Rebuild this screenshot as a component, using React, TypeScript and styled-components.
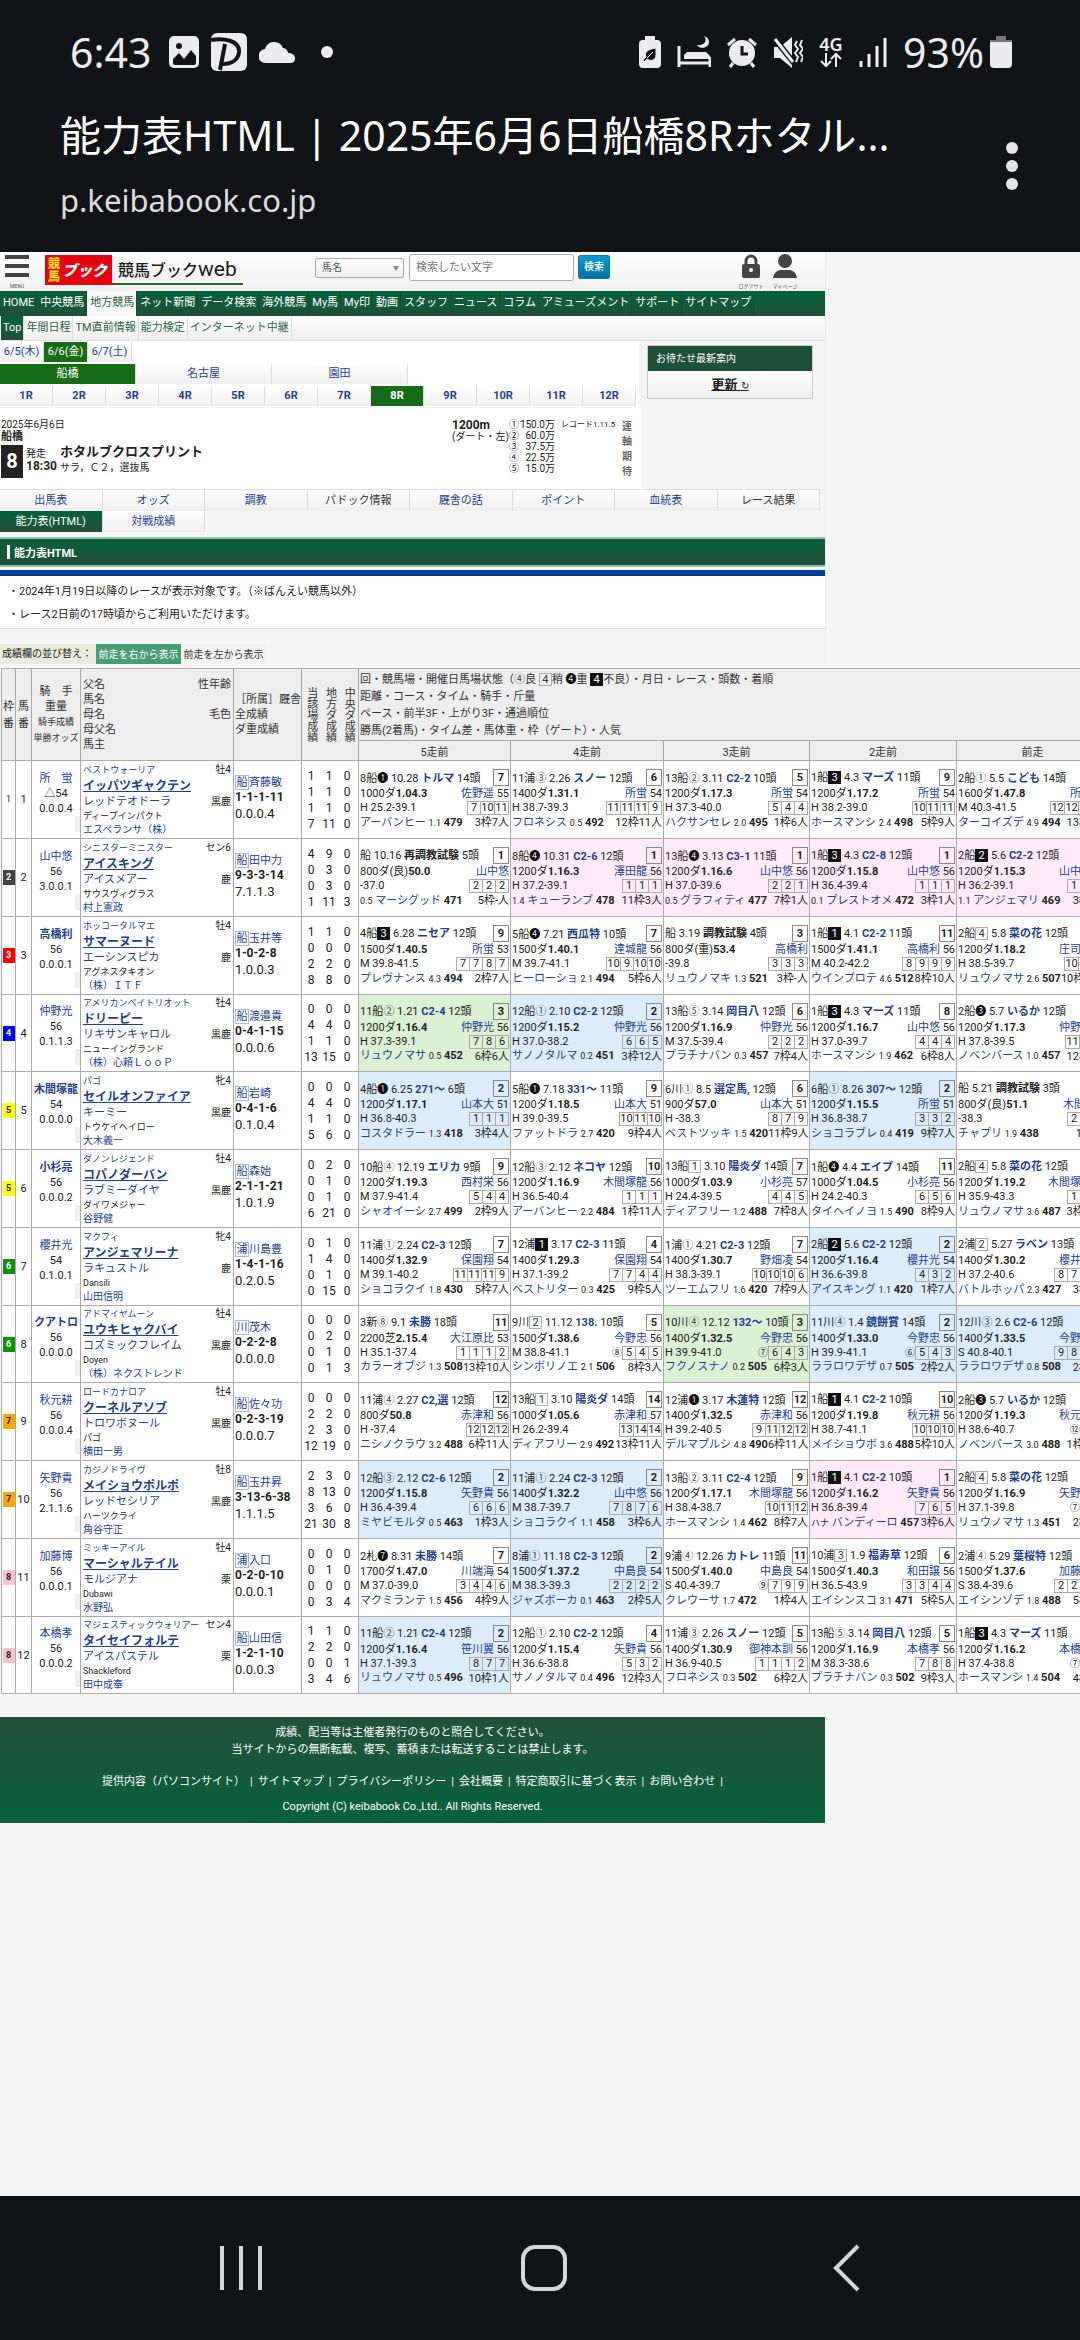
import React from "react";
import styled, { createGlobalStyle, css } from "styled-components";

const GlobalStyle = createGlobalStyle`
  * { box-sizing: border-box; }
  body {
    margin: 0;
    background: #f5f5f5;
    color: #222;
    font-family: Roboto, "Noto Sans CJK JP", sans-serif;
    font-size: 11px;
  }
  a { color: inherit; text-decoration: none; }
`;

const ink = "#121317";
const blue = "#25408f";
const deepGreen = "#204f39";
const freshGreen = "#05623a";
const activeGreen = "#166b16";
const pale = "linear-gradient(#ffffff, #eeeeee)";

/* ---------- phone chrome ---------- */

const Screen = styled.div`
  display: flex;
  flex-direction: column;
  min-height: 100vh;
  overflow: hidden;
`;

const Chrome = styled.header`
  background: ${ink};
  color: #f2f2f4;
  height: 252px;
  font-family: "Noto Sans", "Noto Sans CJK JP", sans-serif;
`;

const StatusBar = styled.div`
  display: flex;
  align-items: center;
  justify-content: space-between;
  height: 104px;
  padding: 0 68px 0 70px;
  font-size: 41px;
  line-height: 40px;
  color: #ececee;
`;

const StatusGroup = styled.div<{ $gap: number }>`
  display: flex;
  align-items: center;
  gap: ${(p) => p.$gap}px;
`;

const NetworkMark = styled.span`
  display: flex;
  flex-direction: column;
  align-items: center;
  font-size: 18px;
  font-weight: 600;
  line-height: 16px;
`;

const AppBar = styled.div`
  display: flex;
  align-items: center;
  justify-content: space-between;
  height: 124px;
  padding: 0 60px;
`;

const PageTitle = styled.h1`
  margin: 0;
  padding-top: 2px;
  font-size: 41px;
  line-height: 66px;
  font-weight: 400;
  color: #fff;
`;

const PageHost = styled.p`
  margin: 0;
  font-size: 31px;
  line-height: 64px;
  color: #dddde0;
`;

const MoreButton = styled.button`
  display: flex;
  border: 0;
  padding: 0;
  background: none;
`;

const SystemNav = styled.nav`
  margin-top: auto;
  display: flex;
  align-items: center;
  justify-content: space-around;
  height: 144px;
  padding: 0 82px 0 90px;
  background: ${ink};
`;

const SystemButton = styled.button`
  display: flex;
  border: 0;
  padding: 0;
  background: none;
`;

/* ---------- site frame ---------- */

const Site = styled.main`
  width: 100%;
`;

const Column = styled.div`
  width: 826px;
  max-width: 100%;
  border-right: 1px solid #e9e9e9;
`;

const SiteHeader = styled.div`
  display: flex;
  align-items: flex-start;
  height: 39px;
  padding: 2px 28px 0 5px;
  background: linear-gradient(#ffffff, #f0f0f0);
`;

const IconLink = styled.a`
  display: flex;
  flex-direction: column;
  align-items: center;
  width: 24px;
  font-size: 5px;
  line-height: 8px;
  color: #555;
  white-space: nowrap;
  gap: 4px;
`;

const Brand = styled.a`
  display: flex;
  align-items: flex-start;
  margin: 1px 0 0 16px;
`;

const BrandName = styled.span`
  display: flex;
  align-items: baseline;
  height: 30px;
  width: 131px;
  padding-left: 6px;
  font-size: 16px;
  line-height: 28px;
  font-weight: 500;
  border-bottom: 2px solid #1d6b22;
  color: #1a1a1a;
  span { font-size: 21px; font-weight: 400; }
`;

const SearchForm = styled.form`
  display: flex;
  align-items: flex-start;
  gap: 4px;
  margin-left: 72px;
  flex: 1;
`;

const SelectWrap = styled.label`
  position: relative;
  margin: 4px 1px 0 0;
  &::after {
    content: "";
    position: absolute;
    right: 5px;
    top: 8px;
    border: 3px solid transparent;
    border-top: 5px solid #888;
    border-bottom: 0;
  }
`;

const FieldSelect = styled.select`
  display: block;
  appearance: none;
  width: 89px;
  height: 20px;
  padding: 0 6px;
  border: 1px solid #aaa;
  border-radius: 2px;
  background: ${pale};
  color: #555;
  font: 10px/18px Roboto, "Noto Sans CJK JP", sans-serif;
`;

const SearchInput = styled.input`
  width: 165px;
  height: 27px;
  padding: 0 6px;
  border: 1px solid #aaa;
  border-radius: 3px;
  background: #fff;
  font: 11px/20px Roboto, "Noto Sans CJK JP", sans-serif;
  &::placeholder { color: #777; }
`;

const SearchButton = styled.button`
  width: 32px;
  height: 24px;
  margin-top: 1px;
  padding: 0;
  border: 1px solid #0a7fab;
  border-radius: 2px;
  background: linear-gradient(#0a9bcd, #0670a0);
  color: #fff;
  font: 500 10px/20px Roboto, "Noto Sans CJK JP", sans-serif;
`;

const UserLinks = styled.div`
  display: flex;
  gap: 10px;
`;

const GlobalNav = styled.nav`
  display: flex;
  height: 25px;
  background: linear-gradient(${freshGreen}, ${deepGreen});
`;

const GlobalLink = styled.a<{ $on?: boolean }>`
  padding: 0 2px 0 3px;
  line-height: 24px;
  white-space: nowrap;
  border-right: 1px solid #1a4a33;
  color: ${(p) => (p.$on ? "#2f5f47" : "#fff")};
  background: ${(p) => (p.$on ? "#f8f8f8" : "transparent")};
`;

const SubNav = styled.nav`
  display: flex;
  height: 25px;
  padding-left: 1px;
  background: ${pale};
  border-bottom: 1px solid #ddd;
`;

const SubLink = styled.a<{ $on?: boolean }>`
  padding: 0 2px;
  line-height: 24px;
  border-right: 1px solid #ddd;
  color: ${(p) => (p.$on ? "#fff" : "#2f5f47")};
  background: ${(p) => (p.$on ? `linear-gradient(${freshGreen}, ${deepGreen})` : "transparent")};
`;

const Upper = styled.div`
  display: flex;
  align-items: flex-start;
  justify-content: space-between;
  padding-right: 12px;
`;

const RacePane = styled.section`
  width: 642px;
`;

const Picker = styled.div`
  width: 639px;
  background: #fff;
  padding-top: 1px;
`;

const PickRow = styled.div`
  display: flex;
  height: 21px;
  margin-bottom: 1px;
`;

const Pick = styled.a<{ $w: number; $on?: boolean; $bold?: boolean }>`
  width: ${(p) => p.$w}px;
  height: 20px;
  line-height: 20px;
  text-align: center;
  border-right: 1px solid #ddd;
  font-weight: ${(p) => (p.$bold ? 700 : 400)};
  color: ${(p) => (p.$on ? "#fff" : blue)};
  background: ${(p) => (p.$on ? activeGreen : pale)};
`;

const RaceInfo = styled.div`
  display: flex;
  height: 81px;
  margin-top: 1px;
  padding: 11px 10px 0 1px;
  background: #fff;
  font-size: 10px;
  line-height: 12px;
`;

const RaceLead = styled.div`
  width: 451px;
`;

const Venue = styled.strong`
  display: block;
  font-size: 11px;
  line-height: 12px;
`;

const RaceHead = styled.div`
  display: flex;
  gap: 2px;
  margin-top: 2px;
`;

const RaceNumber = styled.span`
  width: 22px;
  height: 33px;
  margin-right: 1px;
  background: #222;
  color: #fff;
  font-size: 20px;
  font-weight: 700;
  line-height: 32px;
  text-align: center;
`;

const StartTime = styled.div`
  width: 32px;
  padding-top: 3px;
  line-height: 12px;
  b { display: block; font-size: 12px; }
`;

const RaceName = styled.div`
  line-height: 18px;
  h2 { margin: 0; font-size: 13px; line-height: 14px; }
`;

const Distance = styled.div`
  width: 57px;
  b { display: block; font-size: 12px; }
`;

const Prizes = styled.ol`
  list-style: none;
  width: 46px;
  margin: 0 6px 0 0;
  padding: 0;
  line-height: 11px;
  li { display: flex; justify-content: space-between; }
`;

const Record = styled.div`
  width: 61px;
  font-size: 8px;
`;

const Hope = styled.div`
  width: 10px;
  font-weight: 700;
  line-height: 15px;
  color: #666;
`;

const Notice = styled.aside`
  width: 166px;
  margin-top: 4px;
  border: 1px solid #c8d0cc;
`;

const NoticeTitle = styled.h3`
  margin: 0;
  padding-left: 8px;
  height: 25px;
  line-height: 25px;
  font-size: 10px;
  font-weight: 400;
  color: #fff;
  background: ${deepGreen};
`;

const NoticeBody = styled.a`
  display: block;
  height: 27px;
  line-height: 27px;
  text-align: center;
  font-size: 13px;
  font-weight: 700;
  color: #222;
  text-decoration: underline;
  background: ${pale};
  span { font-size: 10px; font-weight: 400; }
`;

const Tabs = styled.nav`
  display: grid;
  grid-template-columns: repeat(8, 1fr);
  margin-right: 5px;
  border-top: 1px solid #ddd;
`;

const Tab = styled.a<{ $on?: boolean; $plain?: boolean }>`
  height: 21px;
  line-height: 21px;
  text-align: center;
  border-right: 1px solid #ddd;
  color: ${(p) => (p.$on ? "#fff" : p.$plain ? "#333" : blue)};
  background: ${(p) => (p.$on ? `linear-gradient(${freshGreen}, ${deepGreen})` : pale)};
`;

const SectionBar = styled.h2`
  display: flex;
  align-items: center;
  gap: 4px;
  height: 30px;
  margin: 5px 0 3px;
  padding-left: 7px;
  font-size: 11px;
  color: #fff;
  border: solid #9dbcac;
  border-width: 2px 0;
  background: linear-gradient(${freshGreen}, ${deepGreen});
  &::before { content: ""; width: 3px; height: 14px; background: #fff; }
`;

const NoteList = styled.ul`
  list-style: none;
  margin: 0;
  padding: 4px 8px 0;
  height: 59px;
  border-top: 6px solid #003f96;
  border-bottom: 1px solid #ddd;
  background: #fff;
  li { line-height: 23px; }
`;

const SortBar = styled.div`
  display: flex;
  margin-top: 15px;
  height: 20px;
  line-height: 19px;
`;

const SortLabel = styled.span`
  width: 96px;
  padding-left: 2px;
  font-size: 10px;
  background: #e9ecdb;
`;

const SortButton = styled.button<{ $on?: boolean }>`
  width: 85px;
  padding: 0;
  border: 0;
  white-space: nowrap;
  font: 10px/19px Roboto, "Noto Sans CJK JP", sans-serif;
  color: ${(p) => (p.$on ? "#fff" : "#333")};
  background: ${(p) => (p.$on ? "#469c74" : "#f2f2f2")};
`;

/* ---------- ability table ---------- */

const TableScroll = styled.div`
  overflow: hidden;
  padding: 4px 0 0 1px;
`;

const Ability = styled.table`
  table-layout: fixed;
  width: 1108px;
  border-collapse: separate;
  border-spacing: 0;
  border: solid #aaa;
  border-width: 1px 0 0 1px;
  background: #fff;
`;

const edge = css`
  padding: 0;
  border: solid #aaa;
  border-width: 0 1px 1px 0;
`;

const HeadCell = styled.th<{ $align?: string }>`
  ${edge}
  background: #eee;
  font-weight: 400;
  text-align: ${(p) => p.$align ?? "center"};
  color: #333;
`;

const HeadRow = styled.tr<{ $h: number }>`
  height: ${(p) => p.$h}px;
`;

const HeadLines = styled.div<{ $lh: number; $pad?: number }>`
  line-height: ${(p) => p.$lh}px;
  padding: 0 ${(p) => p.$pad ?? 0}px;
  small { font-size: 9px; white-space: nowrap; }
  > div { display: flex; justify-content: space-between; white-space: nowrap; }
`;

const Upright = styled.div`
  display: flex;
  justify-content: space-around;
  span { writing-mode: vertical-rl; line-height: 15px; }
`;

const BodyRow = styled.tr`
  height: 78px;
  &:nth-child(4n) { height: 77px; }
`;

const Cell = styled.td<{ $tone?: string }>`
  ${edge}
  overflow: hidden;
  background: ${(p) => p.$tone ?? "#fff"};
`;

const NumCell = styled(Cell)`
  text-align: center;
`;

const frameTones: Record<number, [string, string]> = {
  1: ["#fff", "#222"],
  2: ["#444", "#fff"],
  3: ["#f00", "#fff"],
  4: ["#00f", "#fff"],
  5: ["#ff0", "#222"],
  6: ["#0a930a", "#fff"],
  7: ["#ffa500", "#222"],
  8: ["#ffc0cb", "#222"],
};

const Frame = styled.span<{ $n: number }>`
  display: block;
  width: 12px;
  height: 15px;
  margin: 0 auto;
  font-size: 9px;
  line-height: 15px;
  font-weight: ${(p) => (p.$n === 1 ? 400 : 700)};
  color: ${(p) => frameTones[p.$n][1]};
  background: ${(p) => frameTones[p.$n][0]};
`;

const JockeyBox = styled.div`
  display: flex;
  flex-direction: column;
  align-items: center;
  height: 76px;
  padding-top: 9px;
  line-height: 15px;
  white-space: nowrap;
`;

const OddsBar = styled.span`
  align-self: flex-end;
  margin-top: auto;
  margin-bottom: 6px;
  width: 5px;
  height: 16px;
  background: #eee;
`;

const Link = styled.a<{ $bold?: boolean }>`
  color: ${blue};
  font-weight: ${(p) => (p.$bold ? 700 : 400)};
`;

const Pedigree = styled.div`
  display: flex;
  flex-direction: column;
  padding: 0 2px;
  line-height: 14px;
`;

const PedLine = styled.div<{ $size: number }>`
  display: flex;
  justify-content: space-between;
  height: 14px;
  line-height: 14px;
  font-size: ${(p) => p.$size}px;
  white-space: nowrap;
  > span:last-child:not(:first-child) { font-size: 10px; }
`;

const HorseName = styled.a`
  color: ${blue};
  font-size: 12px;
  line-height: 18px;
  font-weight: 700;
  text-decoration: underline;
`;

const Stable = styled.div`
  padding-left: 1px;
  white-space: nowrap;
  line-height: 15px;
  b { display: block; font-size: 12px; line-height: 14px; }
  div { font-size: 13px; line-height: 20px; }
`;

const Area = styled.a`
  display: inline-block;
  width: 14px;
  height: 15px;
  line-height: 13px;
  text-align: center;
  border: 1px solid #a9b8de;
  color: ${blue};
`;

const Marks = styled.div`
  display: grid;
  grid-template-columns: repeat(3, 18px);
  justify-content: center;
  text-align: center;
  font-size: 12px;
  line-height: 16px;
  padding-right: 2px;
`;

const RunBox = styled.div`
  padding: 0 1px;
  white-space: nowrap;
`;

const RunLine = styled.div<{ $h: number }>`
  display: flex;
  align-items: center;
  justify-content: space-between;
  height: ${(p) => p.$h}px;
  line-height: ${(p) => p.$h}px;
  small { font-size: 9px; }
`;

const Finish = styled.b`
  width: 16px;
  height: 17px;
  line-height: 15px;
  text-align: center;
  border: 1px solid #888;
`;

const Going = styled.span<{ $dark?: boolean }>`
  display: inline-block;
  width: 13px;
  height: 13px;
  line-height: 11px;
  text-align: center;
  border: 1px solid ${(p) => (p.$dark ? "#111" : "#aaa")};
  background: ${(p) => (p.$dark ? "#111" : "transparent")};
  color: ${(p) => (p.$dark ? "#fff" : "#333")};
`;

const GoingDot = styled.span<{ $dark?: boolean }>`
  color: ${(p) => (p.$dark ? "#111" : "#444")};
  font-family: "Noto Sans CJK JP", sans-serif;
`;

const Passing = styled.span`
  display: flex;
  align-items: center;
  i { font-style: normal; font-size: 10px; margin-right: 1px; }
`;

const PassBox = styled.span<{ $wide: boolean }>`
  width: ${(p) => (p.$wide ? 15 : 14)}px;
  height: 14px;
  margin-left: -1px;
  line-height: 12px;
  text-align: center;
  border: 1px solid #aaa;
`;

/* ---------- footer ---------- */

const Footer = styled.footer`
  width: 825px;
  max-width: 100%;
  height: 106px;
  margin-top: 23px;
  padding-top: 7px;
  text-align: center;
  line-height: 17px;
  color: #fff;
  background: linear-gradient(#24503b, ${freshGreen});
  p { margin: 0; }
`;

const FooterLinks = styled.div`
  display: flex;
  justify-content: center;
  gap: 5px;
  margin: 15px 0 8px;
`;

/* ---------- data ---------- */

type Run = [
  meeting: string, going: string, date: string, race: string, heads: string, finish: number,
  course: string, time: string, jockey: string, load: string,
  pace: string, passing: string,
  rival: string, gap: string, body: string, gate: string
];

interface Entry {
  frame: number; no: number;
  jockey: string; load: string; jrec: string; bold?: boolean;
  sire: string; sex: string; name: string; dam: string; coat: string; bms: string; owner: string;
  area: string; stable: string; total: string; wet: string;
  rec: string;
  runs: Run[];
}

const entries: Entry[] = [
  {
    frame: 1, no: 1, jockey: "所　蛍", load: "△54", jrec: "0.0.0.4",
    sire: "ベストウォーリア", sex: "牡4", name: "イッパツギャクテン", dam: "レッドテオドーラ", coat: "黒鹿", bms: "ディープインパクト", owner: "エスペランサ（株）",
    area: "船", stable: "斉藤敏", total: "1-1-1-11", wet: "0.0.0.4", rec: "1 1 0 1 1 0 1 1 0 7 11 0",
    runs: [
      ["8船", "d1", "10.28", "トルマ", "14頭", 7, "1000ダ", "1.04.3", "佐野遥", "55", "H 25.2-39.1", "7 10 11", "アーバンヒー", "1.1", "479", "3枠7人"],
      ["11浦", "c3", "2.26", "スノー", "12頭", 6, "1400ダ", "1.31.1", "所蛍", "54", "H 38.7-39.3", "11 11 11 9", "フロネシス", "0.5", "492", "12枠11人"],
      ["13船", "c2", "3.11", "C2-2", "10頭", 5, "1200ダ", "1.17.3", "所蛍", "54", "H 37.3-40.0", "5 4 4", "ハクサンセレ", "2.0", "495", "1枠6人"],
      ["1船", "q3", "4.3", "マーズ", "11頭", 9, "1200ダ", "1.17.2", "所蛍", "54", "H 38.2-39.0", "10 11 11", "ホースマンシ", "2.4", "498", "5枠9人"],
      ["2船", "c1", "5.5", "こども", "14頭", 14, "1600ダ", "1.47.8", "所蛍", "54", "M 40.3-41.5", "12 12 13 14", "ターコイズデ", "4.9", "494", "13枠9人"],
    ],
  },
  {
    frame: 2, no: 2, jockey: "山中悠", load: "56", jrec: "3.0.0.1",
    sire: "シニスターミニスター", sex: "セン6", name: "アイスキング", dam: "アイスメアー", coat: "鹿", bms: "サウスヴィグラス", owner: "村上憲政",
    area: "船", stable: "田中力", total: "9-3-3-14", wet: "7.1.1.3", rec: "4 9 0 0 3 0 0 3 0 1 11 3",
    runs: [
      ["船", "", "10.16", "再調教試験", "5頭", 1, "800ダ(良)", "50.0", "山中悠", "", "-37.0", "2 2 2", "マーシグッド", "0.5", "471", "5枠-人"],
      ["8船", "d4", "10.31", "C2-6", "12頭", 1, "1200ダ", "1.16.3", "澤田龍", "56", "H 37.2-39.1", "1 1 1", "キューランブ", "1.4", "478", "11枠3人"],
      ["13船", "d4", "3.13", "C3-1", "11頭", 1, "1200ダ", "1.16.6", "山中悠", "56", "H 37.0-39.6", "2 2 1", "グラフィティ", "0.5", "477", "7枠1人"],
      ["1船", "q3", "4.3", "C2-8", "12頭", 1, "1200ダ", "1.15.8", "山中悠", "56", "H 36.4-39.4", "1 1 1", "プレストオメ", "0.1", "472", "3枠1人"],
      ["2船", "q2", "5.6", "C2-2", "12頭", 1, "1200ダ", "1.15.3", "山中悠", "56", "H 36.2-39.1", "1 1 1", "アンジェマリ", "1.1", "469", "3枠1人"],
    ],
  },
  {
    frame: 3, no: 3, jockey: "高橋利", load: "56", jrec: "0.0.0.1", bold: true,
    sire: "ホッコータルマエ", sex: "牡4", name: "サマーヌード", dam: "エーシンスピカ", coat: "鹿", bms: "アグネスタキオン", owner: "（株）ＩＴＦ",
    area: "船", stable: "玉井等", total: "1-0-2-8", wet: "1.0.0.3", rec: "1 1 0 0 0 0 2 2 0 8 8 0",
    runs: [
      ["4船", "q3", "6.28", "ニセア", "12頭", 9, "1500ダ", "1.40.5", "所蛍", "53", "M 39.8-41.5", "7 7 8 7", "プレヴナンス", "4.3", "494", "2枠7人"],
      ["5船", "d4", "7.21", "西瓜特", "10頭", 7, "1500ダ", "1.40.1", "達城龍", "56", "M 39.7-41.1", "10 9 10 10", "ヒーローショ", "2.1", "494", "5枠6人"],
      ["船", "", "3.19", "調教試験", "4頭", 3, "800ダ(重)", "53.4", "高橋利", "", "-39.8", "3 3 3", "リュウノマキ", "1.3", "521", "3枠-人"],
      ["1船", "q1", "4.1", "C2-2", "11頭", 11, "1500ダ", "1.41.1", "高橋利", "56", "M 40.2-42.2", "8 9 9 9", "ウインプロテ", "4.6", "512", "8枠10人"],
      ["2船", "s4", "5.8", "菜の花", "12頭", 10, "1200ダ", "1.18.2", "庄司大", "56", "H 38.5-39.7", "10 11 11", "リュウノマサ", "2.6", "507", "10枠12人"],
    ],
  },
  {
    frame: 4, no: 4, jockey: "仲野光", load: "56", jrec: "0.1.1.3",
    sire: "アメリカンペイトリオット", sex: "牡4", name: "ドリーピー", dam: "リキサンキャロル", coat: "黒鹿", bms: "ニューイングランド", owner: "（株）心頼ＬｏｏＰ",
    area: "船", stable: "渡邉貴", total: "0-4-1-15", wet: "0.0.0.6", rec: "0 0 0 4 4 0 1 1 0 13 15 0",
    runs: [
      ["11船", "c2", "1.21", "C2-4", "12頭", 3, "1200ダ", "1.16.4", "仲野光", "56", "H 37.3-39.1", "7 8 6", "リュウノマサ", "0.5", "452", "6枠6人"],
      ["12船", "c1", "2.10", "C2-2", "12頭", 2, "1200ダ", "1.15.2", "仲野光", "56", "H 37.0-38.2", "6 6 5", "サノノタルマ", "0.2", "451", "3枠12人"],
      ["13船", "c5", "3.14", "岡目八", "12頭", 6, "1200ダ", "1.16.9", "仲野光", "56", "M 37.5-39.4", "2 2 2", "プラチナバン", "0.3", "457", "7枠4人"],
      ["1船", "q3", "4.3", "マーズ", "11頭", 8, "1200ダ", "1.16.7", "山中悠", "56", "H 37.0-39.7", "4 4 4", "ホースマンシ", "1.9", "462", "6枠8人"],
      ["2船", "d3", "5.7", "いるか", "12頭", 7, "1200ダ", "1.17.3", "仲野光", "56", "H 37.8-39.5", "11 11 9", "ノベンバース", "1.0", "457", "12枠8人"],
    ],
  },
  {
    frame: 5, no: 5, jockey: "木間塚龍", load: "54", jrec: "0.0.0.0", bold: true,
    sire: "パゴ", sex: "牝4", name: "セイルオンファイア", dam: "キーミー", coat: "黒鹿", bms: "トウケイヘイロー", owner: "大木義一",
    area: "船", stable: "岩崎", total: "0-4-1-6", wet: "0.1.0.4", rec: "0 0 0 4 4 0 1 1 0 5 6 0",
    runs: [
      ["4船", "d1", "6.25", "271〜", "6頭", 2, "1200ダ", "1.17.1", "山本大", "51", "H 36.8-40.3", "1 1 1", "コスタドラー", "1.3", "418", "3枠4人"],
      ["5船", "d1", "7.18", "331〜", "11頭", 9, "1200ダ", "1.18.5", "山本大", "51", "H 39.0-39.5", "10 11 10", "ファットドラ", "2.7", "420", "9枠4人"],
      ["6川", "c1", "8.5", "選定馬,", "12頭", 6, "900ダ", "57.0", "山本大", "51", "H -38.3", "8 7 9", "ベストツッキ", "1.5", "420", "11枠9人"],
      ["6船", "c1", "8.26", "307〜", "12頭", 2, "1200ダ", "1.15.5", "所蛍", "51", "H 36.8-38.7", "3 3 2", "ショコラブレ", "0.4", "419", "9枠7人"],
      ["船", "", "5.21", "調教試験", "3頭", 2, "800ダ(良)", "51.1", "木間塚龍", "", "-38.3", "2 2 2", "チャプリ", "1.9", "438", "1枠-人"],
    ],
  },
  {
    frame: 5, no: 6, jockey: "小杉亮", load: "56", jrec: "0.0.0.2", bold: true,
    sire: "ダノンレジェンド", sex: "牡4", name: "コパノダーバン", dam: "ラブミーダイヤ", coat: "黒鹿", bms: "ダイワメジャー", owner: "谷野健",
    area: "船", stable: "森始", total: "2-1-1-21", wet: "1.0.1.9", rec: "0 2 0 0 1 0 0 1 0 6 21 0",
    runs: [
      ["10船", "c4", "12.19", "エリカ", "9頭", 9, "1200ダ", "1.19.3", "西村栄", "56", "M 37.9-41.4", "5 4 4", "シャオイーシ", "2.7", "499", "2枠9人"],
      ["12船", "c3", "2.12", "ネコヤ", "12頭", 10, "1200ダ", "1.16.9", "木間塚龍", "56", "H 36.5-40.4", "1 1 1", "アーバンヒー", "2.2", "484", "1枠11人"],
      ["13船", "s1", "3.10", "陽炎ダ", "14頭", 7, "1000ダ", "1.03.9", "小杉亮", "57", "H 24.4-39.5", "4 4 5", "ディアフリー", "1.2", "488", "7枠8人"],
      ["1船", "d4", "4.4", "エイプ", "14頭", 11, "1000ダ", "1.04.5", "小杉亮", "56", "H 24.2-40.3", "6 5 6", "タイヘイノヨ", "1.5", "490", "8枠9人"],
      ["2船", "s4", "5.8", "菜の花", "12頭", 12, "1200ダ", "1.19.2", "木間塚龍", "56", "H 35.9-43.3", "1 1 1", "リュウノマサ", "3.6", "487", "3枠11人"],
    ],
  },
  {
    frame: 6, no: 7, jockey: "櫻井光", load: "54", jrec: "0.1.0.1",
    sire: "マクフィ", sex: "牝4", name: "アンジェマリーナ", dam: "ラキュストル", coat: "鹿", bms: "Dansili", owner: "山田信明",
    area: "浦", stable: "川島豊", total: "1-4-1-16", wet: "0.2.0.5", rec: "0 1 0 1 4 0 0 1 0 0 15 0",
    runs: [
      ["11浦", "c1", "2.24", "C2-3", "12頭", 7, "1400ダ", "1.32.9", "保園翔", "54", "M 39.1-40.2", "11 11 11 9", "ショコラクイ", "1.8", "430", "5枠7人"],
      ["12浦", "q1", "3.17", "C2-3", "11頭", 4, "1400ダ", "1.29.3", "保園翔", "54", "H 37.1-39.2", "7 7 4 4", "ベストリター", "0.3", "425", "9枠5人"],
      ["1浦", "c1", "4.21", "C2-3", "12頭", 7, "1400ダ", "1.30.7", "野畑凌", "54", "H 38.3-39.1", "10 10 10 6", "ツーエムフリ", "1.6", "420", "7枠9人"],
      ["2船", "q2", "5.6", "C2-2", "12頭", 2, "1200ダ", "1.16.4", "櫻井光", "54", "H 36.6-39.8", "4 3 2", "アイスキング", "1.1", "420", "1枠7人"],
      ["2浦", "s2", "5.27", "ラベン", "13頭", 8, "1400ダ", "1.30.2", "櫻井光", "54", "H 37.2-40.6", "8 7 7 8", "バトルホッパ", "2.3", "427", "3枠7人"],
    ],
  },
  {
    frame: 6, no: 8, jockey: "クアトロ", load: "56", jrec: "0.0.0.0", bold: true,
    sire: "アドマイヤムーン", sex: "牡4", name: "ユウキヒャクバイ", dam: "コズミックフレイム", coat: "黒鹿", bms: "Doyen", owner: "（株）ネクストレンド",
    area: "川", stable: "茂木", total: "0-2-2-8", wet: "0.0.0.0", rec: "0 0 0 0 2 0 0 1 0 0 1 3",
    runs: [
      ["3新", "c8", "9.1", "未勝", "18頭", 11, "2200芝", "2.15.4", "大江原比", "53", "H 35.1-37.4", "1 1 1 2", "カラーオブジ", "1.3", "508", "13枠10人"],
      ["9川", "s2", "11.12", "138.", "10頭", 5, "1500ダ", "1.38.6", "今野忠", "56", "M 38.8-41.1", "⑧ 5 4 5", "シンボリノエ", "2.1", "506", "8枠3人"],
      ["10川", "c4", "12.12", "132〜", "10頭", 3, "1400ダ", "1.32.5", "今野忠", "56", "H 39.9-41.0", "⑦ 6 4 3", "フクノスナノ", "0.2", "505", "6枠3人"],
      ["11川", "c4", "1.4", "鏡餅賞", "14頭", 2, "1400ダ", "1.33.0", "今野忠", "56", "H 39.9-41.1", "⑥ 5 4 3", "ララロワデザ", "0.7", "505", "2枠2人"],
      ["12川", "c3", "2.6", "C2-6", "12頭", 2, "1400ダ", "1.33.5", "今野忠", "56", "S 40.8-40.1", "9 8 4 3", "ララロワデザ", "0.8", "508", "2枠1人"],
    ],
  },
  {
    frame: 7, no: 9, jockey: "秋元耕", load: "56", jrec: "0.0.0.4",
    sire: "ロードカナロア", sex: "牡4", name: "クーネルアソブ", dam: "トロワボヌール", coat: "黒鹿", bms: "パゴ", owner: "横田一男",
    area: "船", stable: "佐々功", total: "0-2-3-19", wet: "0.0.0.7", rec: "0 0 0 2 2 0 2 3 0 12 19 0",
    runs: [
      ["11浦", "c4", "2.27", "C2,選", "12頭", 12, "800ダ", "50.8", "赤津和", "56", "H -37.4", "12 12 12", "ニシノクラウ", "3.2", "488", "6枠11人"],
      ["13船", "s1", "3.10", "陽炎ダ", "14頭", 14, "1000ダ", "1.05.6", "赤津和", "57", "H 26.2-39.4", "13 14 14", "ディアフリー", "2.9", "492", "13枠11人"],
      ["12浦", "d1", "3.17", "木蓮特", "12頭", 12, "1400ダ", "1.32.5", "赤津和", "56", "H 39.2-40.5", "9 11 12 12", "デルマプルシ", "4.8", "490", "6枠11人"],
      ["1船", "q1", "4.1", "C2-2", "10頭", 10, "1200ダ", "1.19.8", "秋元耕", "56", "H 38.7-41.1", "10 10 10", "メイショウボ", "3.6", "488", "5枠10人"],
      ["2船", "d3", "5.7", "いるか", "12頭", 12, "1200ダ", "1.19.3", "秋元耕", "56", "H 38.6-40.7", "⑫ 9 9", "ノベンバース", "3.0", "488", "1枠12人"],
    ],
  },
  {
    frame: 7, no: 10, jockey: "矢野貴", load: "56", jrec: "2.1.1.6",
    sire: "カジノドライヴ", sex: "牡8", name: "メイショウポルポ", dam: "レッドセシリア", coat: "黒鹿", bms: "ハーツクライ", owner: "角谷守正",
    area: "船", stable: "玉井昇", total: "3-13-6-38", wet: "1.1.1.5", rec: "2 3 0 8 13 0 3 6 0 21 30 8",
    runs: [
      ["12船", "c3", "2.12", "C2-6", "12頭", 2, "1200ダ", "1.15.8", "矢野貴", "56", "H 36.4-39.4", "6 6 6", "ミヤビモルタ", "0.5", "463", "1枠3人"],
      ["11浦", "c1", "2.24", "C2-3", "12頭", 2, "1400ダ", "1.32.2", "山中悠", "56", "M 38.7-39.7", "7 8 7 6", "ショコラクイ", "1.1", "458", "3枠6人"],
      ["13船", "c2", "3.11", "C2-4", "12頭", 9, "1200ダ", "1.17.1", "木間塚龍", "56", "H 38.4-38.7", "10 11 12", "ホースマンシ", "1.4", "462", "8枠7人"],
      ["1船", "q1", "4.1", "C2-2", "10頭", 1, "1200ダ", "1.16.2", "矢野貴", "56", "H 36.8-39.4", "7 6 5", "バンディーロ", "ハナ", "457", "3枠6人"],
      ["2船", "s4", "5.8", "菜の花", "12頭", 5, "1200ダ", "1.16.9", "矢野貴", "56", "H 37.1-39.8", "⑦ 3 5", "リュウノマサ", "1.3", "451", "2枠5人"],
    ],
  },
  {
    frame: 8, no: 11, jockey: "加藤博", load: "56", jrec: "0.0.0.1",
    sire: "ミッキーアイル", sex: "牡4", name: "マーシャルテイル", dam: "モルジアナ", coat: "栗", bms: "Dubawi", owner: "水野弘",
    area: "浦", stable: "入口", total: "0-2-0-10", wet: "0.0.0.1", rec: "0 0 0 0 1 0 0 0 0 0 3 4",
    runs: [
      ["2札", "d7", "8.31", "未勝", "14頭", 7, "1700ダ", "1.47.0", "川端海", "54", "M 37.0-39.0", "3 4 4 6", "マクミランテ", "1.5", "456", "4枠9人"],
      ["8浦", "c1", "11.18", "C2-3", "12頭", 2, "1500ダ", "1.37.2", "中島良", "54", "M 38.3-39.3", "2 2 2 2", "ジャズボーカ", "0.1", "463", "2枠5人"],
      ["9浦", "c4", "12.26", "カトレ", "11頭", 11, "1500ダ", "1.40.0", "中島良", "54", "S 40.4-39.7", "⑨ 7 9 9", "クレウーサ", "1.7", "472", "1枠4人"],
      ["10浦", "s3", "1.9", "福寿草", "12頭", 6, "1500ダ", "1.40.3", "和田譲", "56", "H 36.5-43.9", "3 3 4 4", "エイシンスコ", "3.1", "471", "5枠5人"],
      ["2浦", "c4", "5.29", "葉桜特", "12頭", 9, "1500ダ", "1.37.6", "加藤博", "56", "S 38.4-39.6", "2 2 3 5", "エイシンゾデ", "1.8", "488", "5枠8人"],
    ],
  },
  {
    frame: 8, no: 12, jockey: "本橋孝", load: "56", jrec: "0.0.0.2",
    sire: "マジェスティックウォリアー", sex: "セン4", name: "タイセイフォルテ", dam: "アイスパステル", coat: "栗", bms: "Shackleford", owner: "田中成奉",
    area: "船", stable: "山田信", total: "1-2-1-10", wet: "0.0.0.3", rec: "1 1 0 2 2 0 0 0 1 3 4 6",
    runs: [
      ["11船", "c2", "1.21", "C2-4", "12頭", 2, "1200ダ", "1.16.4", "笹川翼", "56", "H 37.1-39.3", "8 7 7", "リュウノマサ", "0.5", "496", "10枠1人"],
      ["12船", "c1", "2.10", "C2-2", "12頭", 4, "1200ダ", "1.15.4", "矢野貴", "56", "H 36.6-38.8", "5 3 2", "サノノタルマ", "0.4", "496", "12枠3人"],
      ["11浦", "c3", "2.26", "スノー", "12頭", 5, "1400ダ", "1.30.9", "御神本訓", "56", "H 36.9-40.5", "1 1 1 2", "フロネシス", "0.3", "502", "6枠2人"],
      ["13船", "c5", "3.14", "岡目八", "12頭", 5, "1200ダ", "1.16.9", "本橋孝", "56", "M 38.3-38.6", "7 8 8", "プラチナバン", "0.3", "502", "9枠3人"],
      ["1船", "q3", "4.3", "マーズ", "11頭", 4, "1200ダ", "1.16.2", "本橋孝", "56", "H 37.4-38.8", "⑦ 5 4", "ホースマンシ", "1.4", "504", "4枠3人"],
    ],
  },
];

const finishTones: Record<number, string> = { 1: "#ffebf8", 2: "#dcecfd", 3: "#dcf0d3" };

/* ---------- pieces ---------- */

const GoingMark = ({ code }: { code: string }) => {
  if (!code) return null;
  const n = Number(code[1]);
  if (code[0] === "c") return <GoingDot>{"①②③④⑤⑥⑦⑧⑨"[n - 1]}</GoingDot>;
  if (code[0] === "d") return <GoingDot $dark>{"❶❷❸❹❺❻❼❽❾"[n - 1]}</GoingDot>;
  return <Going $dark={code[0] === "q"}>{n}</Going>;
};

const RunCell = ({ run }: { run: Run }) => {
  const [meeting, going, date, race, heads, finish, course, time, jockey, load, pace, passing, rival, gap, body, gate] = run;
  const trial = race.includes("調教試験");
  const rivalLink = <Link href="#">{rival}</Link>;
  return (
    <Cell $tone={trial ? undefined : finishTones[finish]}>
      <RunBox>
        <RunLine $h={17}>
          <span>
            {meeting}<GoingMark code={going} /> {date} {trial ? <b>{race}</b> : <Link $bold href="#">{race}</Link>} {heads}
          </span>
          <Finish>{finish}</Finish>
        </RunLine>
        <RunLine $h={15}>
          <span>{course}<b>{time}</b></span>
          <span><Link href="#">{jockey}</Link>{load && ` ${load}`}</span>
        </RunLine>
        <RunLine $h={14}>
          <span>{pace}</span>
          <Passing>
            {passing.split(" ").map((p, i) =>
              /\d/.test(p) ? <PassBox key={i} $wide={p.length > 1}>{p}</PassBox> : <i key={i}>{p}</i>
            )}
          </Passing>
        </RunLine>
        <RunLine $h={15}>
          <span>
            {finish === 1 ? <><small>{gap}</small> {rivalLink}</> : <>{rivalLink} <small>{gap}</small></>} <b>{body}</b>
          </span>
          <span>{gate}</span>
        </RunLine>
      </RunBox>
    </Cell>
  );
};

const EntryRow = ({ e }: { e: Entry }) => (
  <BodyRow>
    <NumCell><Frame $n={e.frame}>{e.frame}</Frame></NumCell>
    <NumCell>{e.no}</NumCell>
    <Cell>
      <JockeyBox>
        <Link $bold={e.bold} href="#">{e.jockey}</Link>
        <span>{e.load}</span>
        <span>{e.jrec}</span>
        <OddsBar />
      </JockeyBox>
    </Cell>
    <Cell>
      <Pedigree>
        <PedLine $size={9}><Link href="#">{e.sire}</Link><span>{e.sex}</span></PedLine>
        <HorseName href="#">{e.name}</HorseName>
        <PedLine $size={11}><Link href="#">{e.dam}</Link><span>{e.coat}</span></PedLine>
        <PedLine $size={9}>{e.bms}</PedLine>
        <PedLine $size={10}><Link href="#">{e.owner}</Link></PedLine>
      </Pedigree>
    </Cell>
    <Cell>
      <Stable>
        <Area href="#">{e.area}</Area><Link href="#">{e.stable}</Link>
        <b>{e.total}</b>
        <div>{e.wet}</div>
      </Stable>
    </Cell>
    <Cell>
      <Marks>{e.rec.split(" ").map((v, i) => <span key={i}>{v}</span>)}</Marks>
    </Cell>
    {e.runs.map((run, i) => <RunCell key={i} run={run} />)}
  </BodyRow>
);

const StatusIcons = () => (
  <>
    <StatusGroup $gap={12}>
      <span>6:43</span>
      <svg width="36" height="32" viewBox="-6 0 36 32">
        <rect width="30" height="32" rx="5" fill="#ececee" />
        <circle cx="10" cy="10" r="3" fill={ink} />
        <path d="M4 27V23l6-6 5 6 7-9 5 6v7a2 2 0 0 1-2 2H6a2 2 0 0 1-2-2Z" fill={ink} />
      </svg>
      <svg width="36" height="38" viewBox="0 0 36 38">
        <rect width="36" height="38" rx="6" fill="#ececee" />
        <path d="M0 7c12-2 29 0 28 12-1 9-9 12-16 12" fill="none" stroke={ink} strokeWidth="4" />
        <path d="M14 11 9 37" stroke={ink} strokeWidth="4" />
      </svg>
      <svg width="36" height="22" viewBox="0 0 36 22">
        <path d="M7 22a7 7 0 0 1-1-14 9.500 9.500 0 0 1 18-1c3 0 5 3 5 5 4 0 7 2 7 5 0 4-2 5-5 5Z" fill="#ececee" />
      </svg>
      <svg width="38" height="12" viewBox="0 0 38 12"><circle cx="20" cy="6" r="6" fill="#ececee" /></svg>
    </StatusGroup>
    <StatusGroup $gap={16}>
      <svg width="22" height="32" viewBox="0 0 22 32">
        <path d="M6 0h10v4h2a4 4 0 0 1 4 4v20a4 4 0 0 1-4 4H4a4 4 0 0 1-4-4V8a4 4 0 0 1 4-4h2Z" fill="#ececee" />
        <path d="M17 12v7c0 5-5 7-9 4l-3 3-1-2 3-3c-2-5 2-8 10-9ZM8 22l6-6" fill={ink} stroke="#ececee" strokeWidth="1" />
      </svg>
      <svg width="34" height="32" viewBox="0 0 34 32" fill="none" stroke="#ececee" strokeWidth="3">
        <path d="M2 10v21M2 27h31v4M33 27V21" />
        <path d="M7 23v-4l3-3h19l4 4v3Z" fill="#ececee" stroke="none" />
        <path d="M27 0c4 5 0 10-7 9 3 5 12 3 12-3 0-3-2-5-5-6Z" fill="#ececee" stroke="none" />
      </svg>
      <svg width="30" height="31" viewBox="0 0 30 31">
        <circle cx="15" cy="16" r="13" fill="#ececee" />
        <path d="M1 8 8 2M29 8l-7-6M6 26l-3 4M24 26l3 4" stroke="#ececee" strokeWidth="3" />
        <path d="M15 9v8h6" fill="none" stroke={ink} strokeWidth="3" />
      </svg>
      <svg width="30" height="31" viewBox="0 0 30 31">
        <path d="M1 10h6L19 0v31L7 21H1Z" fill="#ececee" />
        <path d="M1 1 21 26" stroke={ink} strokeWidth="6" />
        <path d="M2 2 20 25" stroke="#ececee" strokeWidth="3" />
        <path d="m24 4-2 4 3 4-3 4 3 4-2 5M29 3l-2 5 3 4-3 4 3 4-2 5" fill="none" stroke="#ececee" strokeWidth="2" />
      </svg>
      <NetworkMark>
        4G
        <svg width="24" height="16" viewBox="0 0 24 16" fill="none" stroke="#ececee" strokeWidth="2">
          <path d="M7 1v13M2 9l5 5 5-5M17 15V2M12 7l5-5 5 5" />
        </svg>
      </NetworkMark>
      <svg width="28" height="31" viewBox="0 0 28 31" stroke="#ececee" strokeWidth="3">
        <path d="M2 24v6M10 17v13M18 9v21M26 1v29" />
      </svg>
      <StatusGroup $gap={6}>
        <span>93%</span>
        <svg width="22" height="32" viewBox="0 0 22 32">
          <path d="M6 0h10v4h6v3H0V4h6Z" fill="#777" />
          <path d="M0 6h22v22a4 4 0 0 1-4 4H4a4 4 0 0 1-4-4Z" fill="#ececee" />
        </svg>
      </StatusGroup>
    </StatusGroup>
  </>
);

const globalItems = ["HOME", "中央競馬", "地方競馬", "ネット新聞", "データ検索", "海外競馬", "My馬", "My印", "動画", "スタッフ", "ニュース", "コラム", "アミューズメント", "サポート", "サイトマップ"];
const subItems = ["Top", "年間日程", "TM直前情報", "能力検定", "インターネット中継"];
const tabs = ["出馬表", "オッズ", "調教", "パドック情報", "厩舎の話", "ポイント", "血統表", "レース結果", "能力表(HTML)", "対戦成績"];
const prizes = ["150.0万", "60.0万", "37.5万", "22.5万", "15.0万"];
const footerItems = ["提供内容（パソコンサイト）", "サイトマップ", "プライバシーポリシー", "会社概要", "特定商取引に基づく表示", "お問い合わせ"];
const columns = [14, 16, 49, 153, 68, 57, 152, 153, 146, 147, 152];

export default function App() {
  return (
    <Screen>
      <GlobalStyle />
      <Chrome>
        <StatusBar><StatusIcons /></StatusBar>
        <AppBar>
          <div>
            <PageTitle>能力表HTML | 2025年6月6日船橋8Rホタル...</PageTitle>
            <PageHost>p.keibabook.co.jp</PageHost>
          </div>
          <MoreButton aria-label="メニュー">
            <svg width="18" height="48" viewBox="0 0 18 48" fill="#e4e4e6">
              <circle cx="10" cy="6" r="6" /><circle cx="10" cy="24" r="6" /><circle cx="10" cy="42" r="6" />
            </svg>
          </MoreButton>
        </AppBar>
      </Chrome>

      <Site>
        <Column>
          <SiteHeader>
            <IconLink href="#">
              <svg width="24" height="24" viewBox="0 0 24 24" fill="#444">
                <rect y="1" width="24" height="4" /><rect y="10" width="24" height="4" /><rect y="19" width="24" height="4" />
              </svg>
              MENU
            </IconLink>
            <Brand href="#">
              <svg width="67" height="30" viewBox="0 0 67 30">
                <rect width="67" height="30" fill="#e60012" />
                <g fill="#ffe600" fontFamily="Noto Sans CJK JP" fontWeight="900" fontSize="12">
                  <text x="3" y="13">競</text><text x="3" y="26">馬</text>
                </g>
                <text x="17" y="21" fill="#fff" fontFamily="Noto Sans CJK JP" fontWeight="900" fontStyle="italic" fontSize="15">ブック</text>
              </svg>
              <BrandName>競馬ブック<span>web</span></BrandName>
            </Brand>
            <SearchForm>
              <SelectWrap>
                <FieldSelect aria-label="検索対象"><option>馬名</option></FieldSelect>
              </SelectWrap>
              <SearchInput aria-label="検索" placeholder="検索したい文字" />
              <SearchButton type="button">検索</SearchButton>
            </SearchForm>
            <UserLinks>
              <IconLink href="#">
                <svg width="24" height="24" viewBox="0 0 24 24">
                  <path d="M7 12V7a5 5 0 0 1 10 0v5" fill="none" stroke="#444" strokeWidth="3" />
                  <rect x="3" y="10" width="18" height="14" rx="2" fill="#444" />
                  <circle cx="12" cy="16" r="2" fill="#fff" />
                </svg>
                ログアウト
              </IconLink>
              <IconLink href="#">
                <svg width="24" height="24" viewBox="0 0 24 24" fill="#444">
                  <circle cx="12" cy="7" r="7" /><path d="M0 24c1-6 5-8 8-8h8c3 0 7 2 8 8Z" />
                </svg>
                マイページ
              </IconLink>
            </UserLinks>
          </SiteHeader>

          <GlobalNav>
            {globalItems.map((t) => <GlobalLink key={t} href="#" $on={t === "地方競馬"}>{t}</GlobalLink>)}
          </GlobalNav>
          <SubNav>
            {subItems.map((t) => <SubLink key={t} href="#" $on={t === "Top"}>{t}</SubLink>)}
          </SubNav>

          <Upper>
            <RacePane>
              <Picker>
                <PickRow>
                  {["6/5(木)", "6/6(金)", "6/7(土)"].map((t, i) => <Pick key={t} href="#" $w={44} $on={i === 1}>{t}</Pick>)}
                </PickRow>
                <PickRow>
                  {["船橋", "名古屋", "園田"].map((t, i) => <Pick key={t} href="#" $w={136} $on={i === 0}>{t}</Pick>)}
                </PickRow>
                <PickRow>
                  {Array.from({ length: 12 }, (_, i) => <Pick key={i} href="#" $w={53} $bold $on={i === 7}>{i + 1}R</Pick>)}
                </PickRow>
              </Picker>
              <RaceInfo>
                <RaceLead>
                  2025年6月6日
                  <Venue>船橋</Venue>
                  <RaceHead>
                    <RaceNumber>8</RaceNumber>
                    <StartTime>発走<b>18:30</b></StartTime>
                    <RaceName><h2>ホタルブクロスプリント</h2>サラ，Ｃ２，選抜馬</RaceName>
                  </RaceHead>
                </RaceLead>
                <Distance><b>1200m</b>(ダート・左)</Distance>
                <Prizes>
                  {prizes.map((p, i) => <li key={p}><span>{"①②③④⑤"[i]}</span><span>{p}</span></li>)}
                </Prizes>
                <Record>レコード1.11.5</Record>
                <Hope>連軸期待</Hope>
              </RaceInfo>
            </RacePane>
            <Notice>
              <NoticeTitle>お待たせ最新案内</NoticeTitle>
              <NoticeBody href="#">更新 <span>↻</span></NoticeBody>
            </Notice>
          </Upper>

          <Tabs>
            {tabs.map((t) => (
              <Tab key={t} href="#" $on={t.startsWith("能力表")} $plain={t === "パドック情報" || t === "レース結果"}>{t}</Tab>
            ))}
          </Tabs>
          <SectionBar>能力表HTML</SectionBar>
          <NoteList>
            <li>・2024年1月19日以降のレースが表示対象です。（※ばんえい競馬以外）</li>
            <li>・レース2日前の17時頃からご利用いただけます。</li>
          </NoteList>
          <SortBar>
            <SortLabel>成績欄の並び替え：</SortLabel>
            <SortButton $on>前走を右から表示</SortButton>
            <SortButton>前走を左から表示</SortButton>
          </SortBar>
        </Column>

        <TableScroll>
          <Ability>
            <colgroup>{columns.map((w, i) => <col key={i} style={{ width: w }} />)}</colgroup>
            <thead>
              <HeadRow $h={72}>
                <HeadCell rowSpan={2}><HeadLines $lh={17}>枠<br />番</HeadLines></HeadCell>
                <HeadCell rowSpan={2}><HeadLines $lh={17}>馬<br />番</HeadLines></HeadCell>
                <HeadCell rowSpan={2}>
                  <HeadLines $lh={15}>騎　手<br />重量<br /><small>騎手成績<br />単勝オッズ</small></HeadLines>
                </HeadCell>
                <HeadCell rowSpan={2} $align="left">
                  <HeadLines $lh={15} $pad={2}>
                    <div><span>父名</span><span>性年齢</span></div>
                    <div>馬名</div>
                    <div><span>母名</span><span>毛色</span></div>
                    <div>母父名</div>
                    <div>馬主</div>
                  </HeadLines>
                </HeadCell>
                <HeadCell rowSpan={2} $align="left">
                  <HeadLines $lh={15} $pad={1}>
                    <div>［所属］厩舎</div>
                    <div>全成績</div>
                    <div>ダ重成績</div>
                  </HeadLines>
                </HeadCell>
                <HeadCell rowSpan={2}>
                  <Upright><span>当該場成績</span><span>地方ダ成績</span><span>中央ダ成績</span></Upright>
                </HeadCell>
                <HeadCell colSpan={5} $align="left">
                  <HeadLines $lh={17} $pad={1}>
                    回・競馬場・開催日馬場状態（<GoingMark code="c4" />良 <GoingMark code="s4" />稍 <GoingMark code="d4" />重 <GoingMark code="q4" />不良）・月日・レース・頭数・着順<br />
                    距離・コース・タイム・騎手・斤量<br />
                    ペース・前半3F・上がり3F・通過順位<br />
                    勝馬(2着馬)・タイム差・馬体重・枠（ゲート）・人気
                  </HeadLines>
                </HeadCell>
              </HeadRow>
              <HeadRow $h={20}>
                {["5走前", "4走前", "3走前", "2走前", "前走"].map((t) => <HeadCell key={t}>{t}</HeadCell>)}
              </HeadRow>
            </thead>
            <tbody>{entries.map((e) => <EntryRow key={e.no} e={e} />)}</tbody>
          </Ability>
        </TableScroll>

        <Footer>
          <p>成績、配当等は主催者発行のものと照合してください。</p>
          <p>当サイトからの無断転載、複写、蓄積または転送することは禁止します。</p>
          <FooterLinks>
            {footerItems.map((t) => <React.Fragment key={t}><a href="#">{t}</a><span>|</span></React.Fragment>)}
          </FooterLinks>
          <p>Copyright (C) keibabook Co.,Ltd.. All Rights Reserved.</p>
        </Footer>
      </Site>

      <SystemNav>
        <SystemButton aria-label="履歴">
          <svg width="46" height="48" viewBox="0 0 46 48" stroke="#d6d6d8" strokeWidth="4"><path d="M4 2v44M23 2v44M42 2v44" /></svg>
        </SystemButton>
        <SystemButton aria-label="ホーム">
          <svg width="48" height="48" viewBox="0 0 48 48" fill="none" stroke="#d6d6d8" strokeWidth="4"><rect x="3" y="3" width="42" height="42" rx="12" /></svg>
        </SystemButton>
        <SystemButton aria-label="戻る">
          <svg width="46" height="48" viewBox="0 0 46 48" fill="none" stroke="#d6d6d8" strokeWidth="4"><path d="M34 2 12 24l22 22" /></svg>
        </SystemButton>
      </SystemNav>
    </Screen>
  );
}
